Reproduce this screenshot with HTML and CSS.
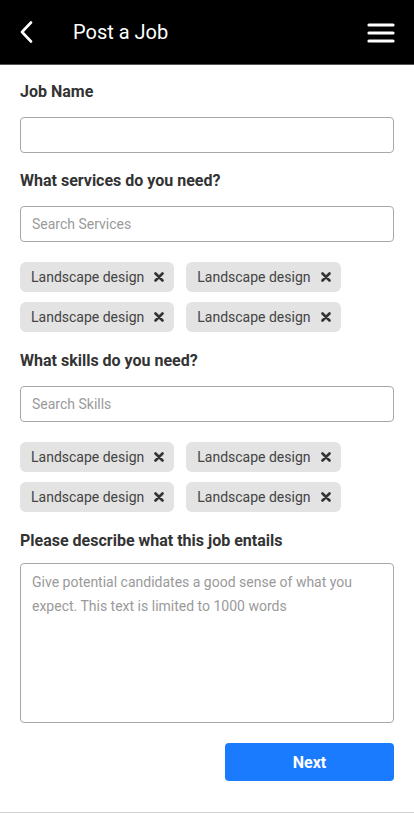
FILE: index.html
```html
<!DOCTYPE html>
<html>
<head>
<meta charset="utf-8">
<link rel="stylesheet" href="styles.css">
</head>
<body>
<div class="page">
  <header class="topbar">
    <div class="topbar-left">
      <svg class="back" width="14" height="22" viewBox="0 0 14 22"><path d="M11 1.5 L2 11 L11 20.5" fill="none" stroke="#fff" stroke-width="2.6" stroke-linecap="round" stroke-linejoin="round"/></svg>
      <h1 class="title">Post a Job</h1>
    </div>
    <svg class="menu" width="28" height="20" viewBox="0 0 28 20"><g stroke="#fff" stroke-width="3.2" stroke-linecap="round"><line x1="2" y1="2" x2="26" y2="2"/><line x1="2" y1="10" x2="26" y2="10"/><line x1="2" y1="18" x2="26" y2="18"/></g></svg>
  </header>
  <main class="form">
    <label class="label">Job Name</label>
    <div class="input"></div>

    <label class="label">What services do you need?</label>
    <div class="input placeholder">Search Services</div>
    <div class="chips">
      <span class="chip">Landscape design <svg class="x" viewBox="0 0 10 10"><path d="M1.5 1.5 L8.5 8.5 M8.5 1.5 L1.5 8.5" stroke="#333" stroke-width="2.6" stroke-linecap="round"/></svg></span>
      <span class="chip">Landscape design <svg class="x" viewBox="0 0 10 10"><path d="M1.5 1.5 L8.5 8.5 M8.5 1.5 L1.5 8.5" stroke="#333" stroke-width="2.6" stroke-linecap="round"/></svg></span>
      <span class="chip">Landscape design <svg class="x" viewBox="0 0 10 10"><path d="M1.5 1.5 L8.5 8.5 M8.5 1.5 L1.5 8.5" stroke="#333" stroke-width="2.6" stroke-linecap="round"/></svg></span>
      <span class="chip">Landscape design <svg class="x" viewBox="0 0 10 10"><path d="M1.5 1.5 L8.5 8.5 M8.5 1.5 L1.5 8.5" stroke="#333" stroke-width="2.6" stroke-linecap="round"/></svg></span>
    </div>

    <label class="label">What skills do you need?</label>
    <div class="input placeholder">Search Skills</div>
    <div class="chips">
      <span class="chip">Landscape design <svg class="x" viewBox="0 0 10 10"><path d="M1.5 1.5 L8.5 8.5 M8.5 1.5 L1.5 8.5" stroke="#333" stroke-width="2.6" stroke-linecap="round"/></svg></span>
      <span class="chip">Landscape design <svg class="x" viewBox="0 0 10 10"><path d="M1.5 1.5 L8.5 8.5 M8.5 1.5 L1.5 8.5" stroke="#333" stroke-width="2.6" stroke-linecap="round"/></svg></span>
      <span class="chip">Landscape design <svg class="x" viewBox="0 0 10 10"><path d="M1.5 1.5 L8.5 8.5 M8.5 1.5 L1.5 8.5" stroke="#333" stroke-width="2.6" stroke-linecap="round"/></svg></span>
      <span class="chip">Landscape design <svg class="x" viewBox="0 0 10 10"><path d="M1.5 1.5 L8.5 8.5 M8.5 1.5 L1.5 8.5" stroke="#333" stroke-width="2.6" stroke-linecap="round"/></svg></span>
    </div>

    <label class="label">Please describe what this job entails</label>
    <div class="textarea placeholder">Give potential candidates a good sense of what you expect. This text is limited to 1000 words</div>

    <div class="actions">
      <button class="next">Next</button>
    </div>
  </main>
</div>
</body>
</html>
```
FILE: styles.css
```css
* { box-sizing: border-box; }
html, body { margin: 0; padding: 0; background: #fff; }
body { font-family: Roboto, "Liberation Sans", sans-serif; color: #333; }
.page { height: 813px; border-bottom: 1px solid #d0d0d0; }
.topbar {
  height: 65px;
  background: #000;
  border-bottom: 1px solid #555;
  display: flex;
  align-items: center;
  justify-content: space-between;
  padding: 0 19px 0 20px;
}
.topbar-left { display: flex; align-items: center; }
.back { display: block; }
.title { margin: 0 0 0 39px; font-size: 20px; font-weight: 400; color: #fff; line-height: 24px; }
.menu { display: block; margin-top: 1px; }
.form { padding: 17px 20px 0; display: flex; flex-direction: column; }
.label { display: block; font-size: 16px; font-weight: 700; line-height: 20px; color: #333; margin-bottom: 15px; }
.input {
  height: 36px;
  border: 1px solid #a8a8a8;
  border-radius: 4px;
  margin-bottom: 18px;
  padding: 0 11px;
  display: flex;
  align-items: center;
  font-size: 14px;
}
.placeholder { color: #9a9a9a; }
.chips {
  display: flex;
  flex-wrap: wrap;
  gap: 10px 12px;
  margin-top: 2px;
  margin-bottom: 19px;
  width: 340px;
}
.chip {
  height: 30px;
  background: #e3e3e3;
  border-radius: 6px;
  padding: 0 10px 0 11px;
  display: inline-flex;
  align-items: center;
  font-size: 14px;
  color: #444;
}
.x { width: 10px; height: 10px; margin-left: 10px; display: block; }
.textarea {
  height: 160px;
  border: 1px solid #a8a8a8;
  border-radius: 4px;
  padding: 6px 11px;
  font-size: 14px;
  line-height: 24px;
  margin-top: -3px;
}
.actions { display: flex; justify-content: flex-end; margin-top: 20px; }
.next {
  width: 169px;
  height: 38px;
  background: #1a7bff;
  color: #fff;
  border: none;
  border-radius: 4px;
  font-family: Roboto, "Liberation Sans", sans-serif;
  font-size: 16px;
  font-weight: 700;
}
```
